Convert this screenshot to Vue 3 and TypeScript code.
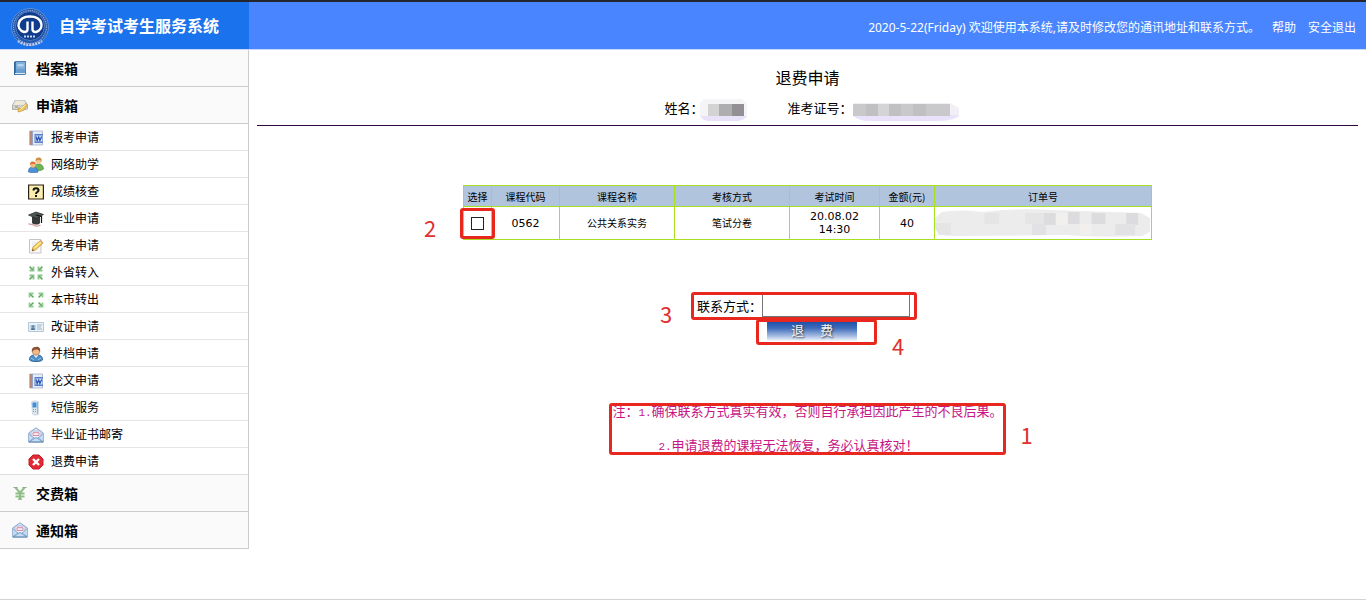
<script setup lang="ts">
import { ref } from 'vue'

interface MenuItem {
  icon: string
  label: string
}
interface MenuGroup extends MenuItem {
  items: MenuItem[]
}

const groups: MenuGroup[] = [
  { icon: 'book', label: '档案箱', items: [] },
  {
    icon: 'drive',
    label: '申请箱',
    items: [
      { icon: 'doc', label: '报考申请' },
      { icon: 'people', label: '网络助学' },
      { icon: 'question', label: '成绩核查' },
      { icon: 'cap', label: '毕业申请' },
      { icon: 'pencil', label: '免考申请' },
      { icon: 'inward', label: '外省转入' },
      { icon: 'outward', label: '本市转出' },
      { icon: 'card', label: '改证申请' },
      { icon: 'user', label: '并档申请' },
      { icon: 'doc', label: '论文申请' },
      { icon: 'phone', label: '短信服务' },
      { icon: 'mail', label: '毕业证书邮寄' },
      { icon: 'cancel', label: '退费申请' },
    ],
  },
  { icon: 'yen', label: '交费箱', items: [] },
  { icon: 'mail', label: '通知箱', items: [] },
]

const selected = ref(false)
const contact = ref('')
</script>

<template>
  <div class="page">
    <svg class="sprite" aria-hidden="true">
      <symbol id="i-book" viewBox="0 0 16 16">
        <path d="M2 2l1.500-1H14v13l-1 1H2z" fill="#4f80b2" />
        <path d="M4 2h9v11.500H4z" fill="#7fb0dc" />
        <path d="M2 2h1.500v13H2z" fill="#356496" />
        <path d="M5.500 4h6v2.500h-6z" fill="#b4d3ee" />
        <path d="M3 13.500h10" stroke="#dbe8f4" />
        <path d="M4 9h9v4H4z" fill="#6a9fd2" />
      </symbol>
      <symbol id="i-drive" viewBox="0 0 16 16">
        <path d="M3 3h10l3 5v4l-2 1H0V8z" fill="#b3b2ae" />
        <path d="M3.500 3.500h9L15 8H1z" fill="#e8e6e0" />
        <path d="M1 8.500h14v3.500H1z" fill="#d6d4ce" />
        <path d="M3 10h3" stroke="#8a8a8a" />
        <path d="M6 15l.5-4 3 .5 4-5 2 1.500-4 5.500z" fill="#f1c95a" stroke="#c39a3c" stroke-width=".7" />
        <path d="M4 6h6M8.500 12.500l5-5" stroke="#fff0b8" />
      </symbol>
      <symbol id="i-doc" viewBox="0 0 16 16">
        <path d="M2 1h12.500v14H2z" fill="#e6ecf6" stroke="#a3afc6" stroke-width=".8" />
        <path d="M1.500 1h2.500v14H1.500z" fill="#b98a76" />
        <path d="M4.500 1v14" stroke="#8694b4" stroke-width=".8" />
        <path d="M6.500 4h8.500v9H6.500z" fill="#5a80cb" />
        <path d="M7.500 5.500h7v6h-7z" fill="#d4e1f8" />
        <path d="M8 6.500l1.200 4 1.500-3.500 1.200 3.500 1.800-4" fill="none" stroke="#2c57ae" stroke-width="1.300" />
      </symbol>
      <symbol id="i-people" viewBox="0 0 16 16">
        <path d="M6.500 13c0-4 1-6 4-6s5 2 5 5c-2 2-6 2-9 1z" fill="#6cb657" stroke="#4e9240" stroke-width=".7" />
        <circle cx="10.500" cy="4" r="3" fill="#f3c692" />
        <path d="M7.500 4c0-3 2-4 4-3.500 2 .5 2.500 2 2 4-1-1.500-3-2.500-6-.5z" fill="#c89042" />
        <path d="M.5 15c0-4 1.500-5 4.500-5s5 2 5 5c-3 1-6 1-9.500 0z" fill="#4f91d8" stroke="#376fa9" stroke-width=".7" />
        <circle cx="5" cy="8" r="2.700" fill="#f4ba7c" />
        <path d="M2 8c0-3 1.500-3.500 3-3.500s3 1 2.800 3C6 6.500 4 6.500 2 8z" fill="#d8703a" />
      </symbol>
      <symbol id="i-question" viewBox="0 0 16 16">
        <path d="M.6 1h14.800v14H.6z" fill="#fbeeb0" stroke="#2b2418" stroke-width="1.200" />
        <path d="M5.500 6.500c0-3 5-3 5 0 0 1.600-2.500 1.500-2.500 3.500M8 11v2" fill="none" stroke="#111" stroke-width="2" />
      </symbol>
      <symbol id="i-cap" viewBox="0 0 16 16">
        <path d="M4 6h8v6c-1 2-6 2-8 0z" fill="#363a39" />
        <path d="M.5 4L8 1l7.500 2.500L8.500 7.500z" fill="#4b5551" stroke="#20292a" stroke-width=".7" />
        <path d="M8 4l5.500 1.500v6.500" fill="none" stroke="#111" stroke-width="1.200" />
        <path d="M.5 12.500c2 2 3 0 5 1.500s4 2 7 0" fill="none" stroke="#d8a0a6" stroke-width="1.200" />
      </symbol>
      <symbol id="i-pencil" viewBox="0 0 16 16">
        <path d="M1.500 1.500h11.500V15H1.500z" fill="#fafafa" stroke="#c4c4c4" />
        <path d="M4 5h6M4 7h5M4 9h3" stroke="#e3e3e3" />
        <path d="M4 13l1-4 7.500-6.500L15 5l-7.500 7z" fill="#f6cc55" stroke="#c49340" stroke-width=".8" />
        <path d="M6.500 10l6.500-6" stroke="#fff09b" stroke-width="1.200" />
        <path d="M4 13l.6-2 1.400 1.500z" fill="#5b4635" />
        <path d="M12.500 2.800L15 5.300" stroke="#e0a070" stroke-width="1.500" />
      </symbol>
      <symbol id="i-inward" viewBox="0 0 16 16">
        <path d="M1.500 1.500L5.500 5.500M5.500 1.500v4H1.500M14.500 1.500L10.500 5.500M10.500 1.500v4h4M1.500 14.500L5.500 10.500M1.500 10.500h4v4M14.500 14.500L10.500 10.500M14.500 10.500h-4v4" fill="none" stroke="#8cc48a" stroke-width="1.800" />
        <path d="M2 2l3 3M14 2l-3 3M2 14l3-3M14 14l-3-3" stroke="#62a365" />
      </symbol>
      <symbol id="i-outward" viewBox="0 0 16 16">
        <path d="M5.500 5.500L1.500 1.500M5.500 1.500h-4v4M10.500 5.500l4-4M10.500 1.500h4v4M5.500 10.500l-4 4M1.500 10.500v4h4M10.500 10.500l4 4M14.500 10.500v4h-4" fill="none" stroke="#92ca8f" stroke-width="1.800" />
        <path d="M2 2l3 3M11 5l3-3M2 14l3-3M11 11l3 3" stroke="#5da25e" />
      </symbol>
      <symbol id="i-card" viewBox="0 0 16 16">
        <path d="M.5 3.500h15v9H.5z" fill="#e8f1f8" stroke="#b4c8d8" />
        <path d="M2.500 6h5v5h-5z" fill="#a3c0d8" />
        <circle cx="5" cy="7.500" r="1.300" fill="#64879f" />
        <path d="M3 11c0-3 4-3 4 0" fill="#55799a" />
        <path d="M9 6h5M9 8h4M9 10h5" stroke="#9fb4c4" />
      </symbol>
      <symbol id="i-user" viewBox="0 0 16 16">
        <path d="M1.500 14c0-4 2-5 6.500-5s6.500 1 6.500 5c-2 2-11 2-13 0z" fill="#4f8ec6" stroke="#35699a" />
        <path d="M5.500 9L8 12l2.500-3" fill="#e3efff" />
        <circle cx="8" cy="5.500" r="3.700" fill="#edb98a" stroke="#aa6d44" stroke-width=".6" />
        <path d="M4 6c-1-4 2-5.500 4-5 3-1 5 2 4 5-1-2-2-2.500-4-2.500S5 4.500 4 6z" fill="#8a5034" />
        <path d="M3 12l3 2M13 12l-3 2" stroke="#92c4e9" />
      </symbol>
      <symbol id="i-phone" viewBox="0 0 16 16">
        <path d="M3.500 2l1-1h5l1 1v12l-1 1h-4l-1-1z" fill="#dde7f0" stroke="#c3cfda" stroke-width=".7" />
        <path d="M4.500 2.500h4v5h-4z" fill="#3e8fd8" />
        <path d="M5 9.500h4M5 11.500h4" stroke="#7e9db5" stroke-dasharray="1 1" />
        <path d="M9.500 2v12" stroke="#a3b7c8" />
      </symbol>
      <symbol id="i-mail" viewBox="0 0 16 16">
        <path d="M.7 6L8 .8 15.300 6v9H.7z" fill="#dbe9f9" stroke="#8ba6cf" />
        <path d="M3 4h10v7H3z" fill="#f0f1fb" stroke="#9fabd0" stroke-width=".8" />
        <path d="M5 5.700h6v2.800H5z" fill="none" stroke="#d98a9c" />
        <path d="M1 7l5 4-5 3.500M15 7l-5 4 5 3.500M2 14.500l6-4 6 4" fill="#c4dcf2" stroke="#84aad0" />
        <path d="M.7 15h14.600" stroke="#5583aa" />
      </symbol>
      <symbol id="i-cancel" viewBox="0 0 16 16">
        <path d="M5 1h6l4 4v6l-4 4H5l-4-4V5z" fill="#e12a34" stroke="#c41c28" stroke-linejoin="round" />
        <path d="M5 5l6 6M11 5l-6 6" stroke="#fff" stroke-width="2.400" />
      </symbol>
      <symbol id="i-yen" viewBox="0 0 16 16">
        <path d="M3.500 2.500L8 8l4.500-5.500M8 8v6.500M3.500 8.500h9M3.500 11.500h9" fill="none" stroke="#8fbc89" stroke-width="2" />
        <path d="M1.500 2.500h4M10.500 2.500h4M6 14.200h4" stroke="#85b47f" stroke-width="1.200" />
      </symbol>
    </svg>

    <header class="topbar">
      <div class="brand">
        <svg class="logo" viewBox="0 0 40 40" aria-hidden="true">
          <circle cx="20" cy="20" r="18.500" fill="#2359ae" stroke="#5b8fdc" />
          <circle cx="20" cy="20" r="16.500" fill="none" stroke="#8fafe0" stroke-width="1.200" stroke-dasharray="1.200 1" />
          <circle cx="20" cy="19" r="14.500" fill="#103c8c" stroke="#527dc3" />
          <path d="M17.500 14.500v8q0 2.500-3.500 2.500C5 22.500 7 9.500 20 9.500S35 22.500 26 25q-3.500 0-3.500-2.500v-8" fill="none" stroke="#fff" stroke-width="2.400" />
          <path d="M14 29.500h12" stroke="#c4d6f2" stroke-width="2" stroke-dasharray="2 1" />
          <path d="M8 34c7 5 17 5 24 0" fill="none" stroke="#c5cbec" stroke-width="2.500" stroke-dasharray="2 1" />
        </svg>
        <h1>自学考试考生服务系统</h1>
      </div>
      <div class="welcome">
        <span>2020-5-22(Friday) 欢迎使用本系统,请及时修改您的通讯地址和联系方式。</span>
        <a href="#help">帮助</a>
        <a href="#logout">安全退出</a>
      </div>
    </header>

    <div class="body">
      <nav class="sidebar">
        <section v-for="group in groups" :key="group.label">
          <button type="button" class="group">
            <svg class="icon" aria-hidden="true"><use :href="'#i-' + group.icon" /></svg>
            {{ group.label }}
          </button>
          <ul v-if="group.items.length">
            <li v-for="item in group.items" :key="item.label">
              <a href="#menu">
                <svg class="icon" aria-hidden="true"><use :href="'#i-' + item.icon" /></svg>
                {{ item.label }}
              </a>
            </li>
          </ul>
        </section>
      </nav>

      <main>
        <h2>退费申请</h2>
        <div class="identity">
          <span>姓名：</span>
          <svg class="mask-name" viewBox="0 0 48 24" aria-hidden="true">
            <path d="M4 1h38l5 5v12q-5 5-12 5H9q-6 0-9-5V5z" fill="#f5f4f6" />
            <path d="M0 18h47q-3 5-11 5H10q-7 0-10-5z" fill="#e8e3f8" />
            <path d="M8 6h11v12H8z" fill="#d3d3d4" />
            <path d="M19 6h13v12H19z" fill="#aeadb0" />
            <path d="M32 6h12v12H32z" fill="#929095" />
          </svg>
          <span class="ticket">准考证号：</span>
          <svg class="mask-ticket" viewBox="0 0 108 24" aria-hidden="true">
            <path d="M0 5h97l9 5v9q-8 5-26 4H18q-13 0-18-5z" fill="#f2f0f6" />
            <path d="M0 17h106q-8 6-24 6H18q-13 0-18-6z" fill="#e8e2fa" />
            <path d="M0 6h97v12H0z" fill="#c9c8ca" />
            <path d="M13 6h12v12H13zM36 6h12v12H36zM60 6h13v12H60z" fill="#c0bfc1" />
            <path d="M25 6h11v12H25z" fill="#d4d3d5" />
          </svg>
        </div>

        <table>
          <colgroup>
            <col class="w28" /><col class="w68" /><col class="w115" /><col class="w115" />
            <col class="w90" /><col class="w55" /><col class="w217" />
          </colgroup>
          <thead>
            <tr>
              <th>选择</th><th>课程代码</th><th>课程名称</th><th>考核方式</th>
              <th>考试时间</th><th>金额(元)</th><th>订单号</th>
            </tr>
          </thead>
          <tbody>
            <tr>
              <td>
                <div class="check">
                  <input v-model="selected" type="checkbox" aria-label="选择" />
                  <span class="mark mark-check"></span>
                  <span class="num num-check">2</span>
                </div>
              </td>
              <td>0562</td>
              <td>公共关系实务</td>
              <td>笔试分卷</td>
              <td>20.08.02<br />14:30</td>
              <td>40</td>
              <td>
                <div class="order">
                  <svg viewBox="0 0 218 28" preserveAspectRatio="none" aria-hidden="true">
                    <path d="M7 3q20-3 42 0 30-4 70-2l89 3 9 5v14l-8 4q-40 2-78-1L20 27l-16-1-4-7V9z" fill="#ececed" />
                    <path d="M0 14h16v12H4l-4-7zM50 4h15v11H50zM91 4h20v11H91z" fill="#e5e5e6" />
                    <path d="M110 4h12v12h-12zM134 3h12v12h-12zM158 4h14v11h-14zM193 4h12v12h-12z" fill="#dcdcde" />
                    <path d="M98 15h14v11H98zM182 15h20v11h-20z" fill="#e2e2e4" />
                    <path d="M122 4h12v12h-12zM146 15h12v11h-12z" fill="#f1f0ee" />
                  </svg>
                </div>
              </td>
            </tr>
          </tbody>
        </table>

        <form @submit.prevent>
          <div class="contact">
            <label for="contact">联系方式：</label>
            <input id="contact" v-model="contact" type="text" />
            <span class="mark mark-contact"></span>
            <span class="num num-contact">3</span>
          </div>
          <div class="submit">
            <button type="submit"><span>退</span><span>费</span></button>
            <span class="mark mark-submit"></span>
            <span class="num num-submit">4</span>
          </div>
        </form>

        <div class="notes">
          <p>注：<span>1.</span>确保联系方式真实有效，否则自行承担因此产生的不良后果。</p>
          <p class="second"><span>2.</span>申请退费的课程无法恢复，务必认真核对！</p>
          <span class="mark mark-notes"></span>
          <span class="num num-notes">1</span>
        </div>
      </main>
    </div>
  </div>
</template>

<style>
body {
  margin: 0;
  background: #fff;
}
</style>

<style scoped>
* {
  box-sizing: border-box;
}
.page {
  display: flex;
  flex-direction: column;
  min-height: 100vh;
  border-bottom: 1px solid #d3d3d3;
  color: #000;
  font: 12px/18px "Noto Sans", "Noto Sans CJK SC", sans-serif;
}
.sprite {
  display: none;
}
.topbar {
  display: flex;
  height: 50px;
  border-top: 2px solid #25252d;
  border-bottom: 1px solid #c8d8f5;
  background: #4985ff;
  color: #fff;
}
.brand {
  display: flex;
  align-items: center;
  gap: 9px;
  width: 249px;
  padding-left: 10px;
  background: #1a73ec;
}
.logo {
  width: 40px;
  height: 40px;
  margin-top: 3px;
}
h1,
h2,
p,
ul {
  margin: 0;
  padding: 0;
}
h1 {
  font-size: 16px;
  line-height: 24px;
}
.welcome {
  display: flex;
  flex: 1;
  align-items: center;
  justify-content: flex-end;
  gap: 12px;
  padding: 4px 10px 0 0;
}
.welcome a {
  color: inherit;
  text-decoration: none;
}
.body {
  display: flex;
  flex: 1;
  align-items: flex-start;
}
.sidebar {
  width: 249px;
  flex-shrink: 0;
  border-right: 1px solid #ccc;
}
.group {
  display: flex;
  align-items: center;
  gap: 8px;
  width: 100%;
  height: 37px;
  padding: 0 12px;
  border: 0;
  border-bottom: 1px solid #ccc;
  background: #fafafa;
  color: #000;
  font: bold 14px/20px "Noto Sans CJK SC", sans-serif;
}
.icon {
  width: 16px;
  height: 16px;
  flex-shrink: 0;
}
ul {
  list-style: none;
}
li a {
  display: flex;
  align-items: center;
  gap: 7px;
  height: 27px;
  padding: 2px 0 0 28px;
  border-bottom: 1px solid #e5e5e5;
  color: #000;
  text-decoration: none;
}
li:last-child a {
  border-bottom-color: #ddd;
}
main {
  flex: 1;
  padding: 15px 8px 0;
}
h2 {
  font: 16px/24px "Noto Sans CJK SC", sans-serif;
  text-align: center;
}
.identity {
  display: flex;
  align-items: center;
  justify-content: center;
  height: 37px;
  padding: 2px 0 0 10px;
  border-bottom: 1px solid #32063e;
  font-size: 13px;
}
.identity .ticket {
  margin-left: 40px;
}
.mask-name {
  width: 48px;
  height: 24px;
  margin-left: -4px;
  margin-top: 4px;
}
.mask-ticket {
  width: 108px;
  height: 24px;
  margin-top: 4px;
}
table {
  width: 689px;
  max-width: 100%;
  margin: 59px auto 0;
  border-collapse: collapse;
  table-layout: fixed;
  font: 11px/13px "DejaVu Sans", "Noto Sans CJK SC", sans-serif;
  text-align: center;
}
.w28 { width: 28px; }
.w68 { width: 68px; }
.w115 { width: 115px; }
.w90 { width: 90px; }
.w55 { width: 55px; }
.w217 { width: 217px; }
th,
td {
  padding: 0;
  border: 1px solid #a6e01e;
  background-clip: padding-box;
}
th {
  height: 21px;
  background-color: #b0c4de;
  font: 10px/13px "Noto Sans CJK SC", sans-serif;
}
td {
  height: 33px;
}
td:nth-child(3),
td:nth-child(4) {
  font-size: 10px;
}
.check {
  position: relative;
  width: 13px;
  height: 13px;
  margin: 0 auto;
}
.check input {
  display: block;
  width: 13px;
  height: 13px;
  margin: 0;
  border: 1px solid #222;
  background: #fff;
  appearance: none;
}
.check input:checked {
  background: #345;
}
.order svg {
  display: block;
  width: 100%;
  height: 28px;
}
.mark {
  position: absolute;
  border: 3px solid #e8281e;
  border-radius: 3px;
  pointer-events: none;
}
.num {
  position: absolute;
  color: #e03030;
  font: 22px/24px "Noto Sans CJK SC", sans-serif;
}
.mark-check {
  inset: -9px -11px;
}
.num-check {
  top: -2px;
  left: -47px;
}
form {
  display: flex;
  flex-direction: column;
  align-items: center;
  gap: 4px;
  margin-top: 54px;
}
.contact {
  position: relative;
  display: flex;
  align-items: center;
  margin-right: 8px;
  font-size: 13px;
}
.contact input {
  width: 148px;
  height: 23px;
  padding: 0 4px;
  border: 1px solid #767676;
  background: #fff;
  font: inherit;
}
.mark-contact {
  inset: -2px -7px -3px -6px;
}
.num-contact {
  top: 7px;
  left: -37px;
}
.submit {
  position: relative;
  margin-left: 9px;
}
.submit button {
  display: flex;
  justify-content: center;
  gap: 16px;
  width: 90px;
  height: 20px;
  padding: 0;
  border: 0;
  background: linear-gradient(#1a4da8, #3e6bba 35%, #a5bce2 75%, #f4f7fc);
  color: #f4f4f4;
  font: 13px/18px "Noto Sans CJK SC", sans-serif;
  text-shadow: 1px 1px 2px #333;
}
.mark-submit {
  inset: -2px -20px -4px -11px;
}
.num-submit {
  top: 12px;
  left: 125px;
}
.notes {
  position: relative;
  width: fit-content;
  margin: 53px auto 0;
  color: #c71585;
  font: 13px/34px "Noto Sans CJK SC", sans-serif;
}
.notes p span {
  font: 11px "Liberation Mono", monospace;
}
.notes .second {
  padding-left: 46px;
}
.mark-notes {
  inset: 9px -3px 7px;
}
.num-notes {
  top: 28px;
  right: -30px;
}
</style>
